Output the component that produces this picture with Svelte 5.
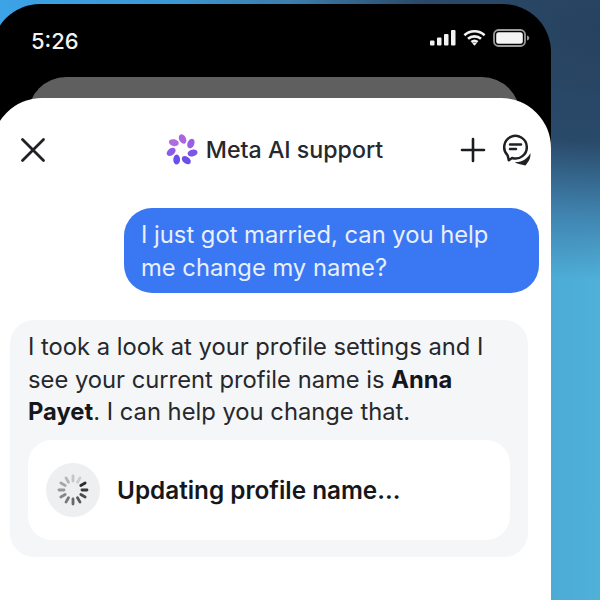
<script lang="ts">
  // Meta AI logo petals and spinner ticks are generated rather than hand-placed
  const petals = [
    { a: 3, c: '#a966e2' },
    { a: 54, c: '#9a5fe4' },
    { a: 106, c: '#7d55e6' },
    { a: 157, c: '#6c50e6' },
    { a: 209, c: '#6a50e8' },
    { a: 260, c: '#8d5ce4' },
    { a: 312, c: '#b16ce0' }
  ];
  const ticks = Array.from({ length: 12 }, (_, i) => ({
    a: 60 + i * 30,
    o: Math.max(0.16, 0.95 - i * 0.075)
  }));
</script>

<div class="page">
  <div class="phone">
    <div class="status">
      <span class="time">5:26</span>
      <div class="status-icons">
        <svg width="26" height="16" viewBox="0 0 26 16" fill="#f2f2f2">
          <rect x="0" y="10.5" width="4.5" height="5" rx="1" />
          <rect x="7" y="7.5" width="4.5" height="8" rx="1" />
          <rect x="14" y="4" width="4.5" height="11.5" rx="1" />
          <rect x="21" y="0" width="4.5" height="15.5" rx="1" />
        </svg>
        <svg width="23" height="17" viewBox="0 0 23 17" fill="none" stroke="#f2f2f2" stroke-width="2.6">
          <path d="M1.4 6.2C7 .9 16 .9 21.6 6.2" />
          <path d="M5 9.800c3.600-3.300 9.400-3.300 13 0" />
          <path d="M8.400 13c1.800-1.400 4.400-1.400 6.200 0" />
          <path d="M11.500 16.800l-2.200-2.600c1.300-.9 3.100-.9 4.400 0z" fill="#f2f2f2" stroke="none" />
        </svg>
        <svg width="37" height="18" viewBox="0 0 37 18" fill="none">
          <rect x="1" y="1" width="31" height="16" rx="4.500" stroke="#9a9a9a" stroke-width="1.800" />
          <rect x="3.200" y="3.200" width="26.600" height="11.600" rx="2.500" fill="#f4f4f4" />
          <path d="M34 6.500c1.500.4 2.300 1.300 2.300 2.500s-.8 2.100-2.300 2.500z" fill="#9a9a9a" />
        </svg>
      </div>
    </div>

    <div class="sheet-back"></div>

    <div class="sheet">
      <header class="head">
        <svg class="close" width="30" height="30" viewBox="0 0 30 30" fill="none" stroke="#1f2124" stroke-width="2.800" stroke-linecap="round">
          <path d="M4.500 4.500l21 21M25.500 4.500l-21 21" />
        </svg>
        <div class="title">
          <svg width="32" height="32" viewBox="-16 -16 32 32">
            {#each petals as p}
              <ellipse cx="0" cy="-11" rx="3.400" ry="5" fill={p.c} transform="rotate({p.a}) rotate(-30 0 -11)" />
            {/each}
          </svg>
          <span>Meta AI support</span>
        </div>
        <div class="actions">
          <svg width="26" height="26" viewBox="0 0 26 26" fill="none" stroke="#1a1c1f" stroke-width="2.600" stroke-linecap="round">
            <path d="M13 2v22M2 13h22" />
          </svg>
          <svg width="33" height="33" viewBox="0 0 33 33" fill="none">
            <path d="M9.600 21.300a11.300 11.300 0 1 1 4.500 2.700l-3.300 2.300z" stroke="#1f2124" stroke-width="2.500" stroke-linejoin="round" />
            <path d="M12 10.500h11M12 15h6" stroke="#1f2124" stroke-width="2.500" stroke-linecap="round" />
            <path d="M32.500 19c.1 3.500-.5 6.500-2.500 9l-2.500 3.500-6.500-1.500c-1.500-.4-3-1-4.200-2 6.500.5 12.700-3 15.700-9z" fill="#1f2124" />
          </svg>
        </div>
      </header>

      <div class="thread">
        <div class="user-msg">I just got married, can you help me change my name?</div>
        <div class="ai-msg">
          <p>I took a look at your profile settings and I see your current profile name is <b>Anna</b> <b>Payet</b>. I can help you change that.</p>
          <div class="progress">
            <div class="spin">
              <svg width="32" height="32" viewBox="-16 -16 32 32" stroke="#222" stroke-width="2.800" stroke-linecap="round">
                {#each ticks as t}
                  <line x1="0" y1="-9" x2="0" y2="-14" opacity={t.o} transform="rotate({t.a})" />
                {/each}
              </svg>
            </div>
            <span class="progress-label">Updating profile name...</span>
          </div>
        </div>
      </div>
    </div>
  </div>
</div>

<style>
  :global(body) {
    margin: 0;
  }

  .page {
    width: 600px;
    height: 600px;
    overflow: hidden;
    font-family: Inter, "Liberation Sans", sans-serif;
    background:
      radial-gradient(ellipse 420px 250px at 600px 30px, #27425f 0%, #2a4a6a 45%, rgba(60, 120, 165, 0.75) 75%, rgba(79, 176, 216, 0) 100%),
      linear-gradient(90deg, #3ba3e6 0%, #3b90c8 45%, #4fb0d8 100%);
    background-color: #4fb0d8;
  }

  .phone {
    box-sizing: border-box;
    width: 559px;
    height: 640px;
    margin: 4px 0 0 -8px;
    background: #000;
    border-radius: 48px 48px 0 0;
    overflow: hidden;
  }

  .status {
    box-sizing: border-box;
    height: 73px;
    padding: 0 21px 0 39px;
    display: flex;
    align-items: center;
    justify-content: space-between;
    color: #f2f2f2;
  }

  .time {
    font-size: 22px;
    font-weight: 500;
  }

  .status-icons {
    display: flex;
    align-items: center;
    gap: 7px;
    position: relative;
    top: -3px;
  }

  .sheet-back {
    height: 40px;
    margin: 0 31px 0 36px;
    background: #5f5f5f;
    border-radius: 38px 38px 0 0;
  }

  .sheet {
    position: relative;
    height: 560px;
    margin-top: -19px;
    background: #fff;
    border-radius: 50px 50px 0 0;
  }

  .head {
    box-sizing: border-box;
    height: 104px;
    padding: 0 20px 0 26px;
    display: grid;
    grid-template-columns: 1fr auto 1fr;
    align-items: center;
  }

  .title {
    display: flex;
    align-items: center;
    gap: 8px;
    font-size: 23.2px;
    font-weight: 500;
    color: #26282c;
  }

  .actions {
    justify-self: end;
    display: flex;
    align-items: center;
    gap: 12px;
  }

  .thread {
    display: flex;
    flex-direction: column;
    padding: 6px 12px 0 18px;
    gap: 27px;
  }

  .user-msg {
    box-sizing: border-box;
    align-self: flex-end;
    width: 415px;
    padding: 10px 20px 9px 17px;
    font-size: 23.75px;
    line-height: 33px;
    color: #e9effd;
    background: #3a77f2;
    border-radius: 28px;
  }

  .ai-msg {
    box-sizing: border-box;
    width: 518px;
    padding: 11px 18px 17px;
    background: #f5f6f8;
    border-radius: 24px;
  }

  .ai-msg p {
    margin: 0 0 11.5px;
    font-size: 23.75px;
    line-height: 32.5px;
    color: #26282c;
  }

  .ai-msg b {
    font-weight: 700;
    color: #15171a;
  }

  .progress {
    box-sizing: border-box;
    height: 100px;
    padding-left: 18px;
    display: flex;
    align-items: center;
    gap: 17px;
    background: #fff;
    border-radius: 24px;
    font-size: 24.3px;
    font-weight: 600;
    color: #15171a;
  }

  .spin {
    width: 54px;
    height: 54px;
    flex: none;
    display: flex;
    align-items: center;
    justify-content: center;
    background: #eeeff1;
    border-radius: 50%;
  }
</style>
